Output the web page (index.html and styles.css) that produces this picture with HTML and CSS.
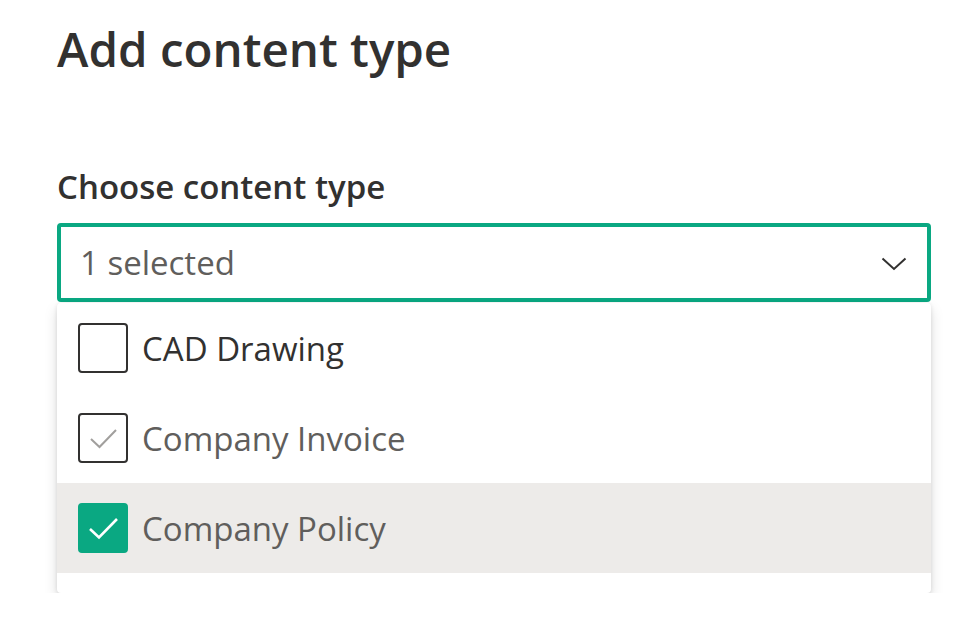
FILE: index.html
```html
<!DOCTYPE html>
<html lang="en">
<head>
    <meta charset="UTF-8">
    <meta name="viewport" content="width=device-width, initial-scale=1.0">
    <title>Add content type</title>
    <link rel="stylesheet" href="styles.css">
</head>
<body>
    <h1 class="title">Add content type</h1>

    <div class="field">
        <label class="label">Choose content type</label>

        <div class="dropdown">
            <span class="dropdown-text">1 selected</span>
            <svg class="chevron" width="26" height="14" viewBox="0 0 26 14">
                <path d="M1.5 1.5 L13 12 L24.5 1.5" fill="none" stroke="#323130" stroke-width="2"/>
            </svg>
        </div>

        <div class="menu">
            <div class="option">
                <span class="box"></span>
                <span class="option-text dark">CAD Drawing</span>
            </div>
            <div class="option">
                <span class="box">
                    <svg width="50" height="50" viewBox="0 0 50 50">
                        <path d="M13 26 L21.5 34 L38 17" fill="none" stroke="#a19f9d" stroke-width="2"/>
                    </svg>
                </span>
                <span class="option-text">Company Invoice</span>
            </div>
            <div class="option selected">
                <span class="box checked">
                    <svg width="50" height="50" viewBox="0 0 50 50">
                        <path d="M12 26 L21 34.5 L39 16" fill="none" stroke="#ffffff" stroke-width="2.6"/>
                    </svg>
                </span>
                <span class="option-text">Company Policy</span>
            </div>
        </div>
    </div>
</body>
</html>
```
FILE: styles.css
```css
body{
    margin: 0;
    padding: 0 33px 0 57px;
    background-color: #ffffff;
    font-family: "Open Sans", "Noto Sans", sans-serif;
    color: #323130;
}

.title{
    margin: 0;
    padding-top: 14px;
    font-size: 47.5px;
    font-weight: 600;
    line-height: 70px;
    color: #323130;
}

.field{
    margin-top: 83px;
}

.label{
    display: block;
    font-size: 33px;
    font-weight: 600;
    line-height: 40px;
    color: #323130;
}

.dropdown{
    margin-top: 16px;
    height: 71px;
    border: 4px solid #0aa882;
    border-radius: 4px;
    display: flex;
    align-items: center;
    padding: 0 20px 0 19px;
}
.dropdown-text{
    flex: 1;
    font-size: 33px;
    color: #605e5c;
}
.chevron{
    margin-top: 2px;
}

.menu{
    margin-top: 1px;
    background-color: #ffffff;
    border-radius: 4px;
    padding-bottom: 20px;
    box-shadow: 0 6px 14px rgba(0, 0, 0, .13), 0 1px 4px rgba(0, 0, 0, .11);
}

.option{
    height: 90px;
    display: flex;
    align-items: center;
    padding-left: 21px;
}
.option.selected{
    background-color: #edebe9;
}

.box{
    width: 46px;
    height: 46px;
    border: 2px solid #323130;
    border-radius: 4px;
    position: relative;
    flex-shrink: 0;
}
.box svg{
    position: absolute;
    left: -2px;
    top: -2px;
}
.box.checked{
    background-color: #0aa882;
    border-color: #0aa882;
}

.option-text{
    margin-left: 14px;
    font-size: 33px;
    color: #605e5c;
}
.option-text.dark{
    color: #323130;
}
```
